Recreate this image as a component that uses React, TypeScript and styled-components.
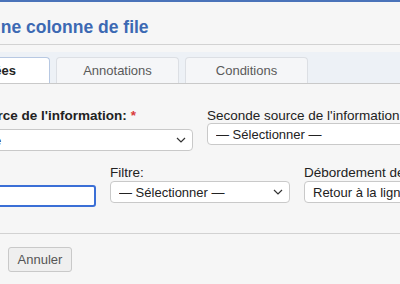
import React from 'react';
import styled, { createGlobalStyle } from 'styled-components';

const GlobalStyle = createGlobalStyle`
  html, body {
    margin: 0;
    padding: 0;
    background: #f6f6f6;
    overflow: hidden;
  }
  body {
    font-family: 'Liberation Sans', Arial, sans-serif;
    font-size: 13px;
    color: #222;
  }
`;

const Dialog = styled.div`
  width: 588px;
  margin-left: -94px;
  height: 284px;
  background: #f6f6f6;
  border-top: 2px solid #4a73b9;
  display: flex;
  flex-direction: column;
`;

const Header = styled.div`
  padding: 14px 10px 6px 18px;
  border-bottom: 1px solid #d2d2d2;
`;

const Title = styled.h2`
  margin: 0;
  font-size: 17.5px;
  line-height: 22px;
  font-weight: bold;
  color: #3c69b3;
`;

const TabStrip = styled.div`
  margin-top: 7px;
  padding: 5px 0 0 21px;
  background: #edf1f6;
  border-bottom: 1px solid #c9c9c9;
  display: flex;
  gap: 6px;
`;

const Tab = styled.div<{ $active?: boolean }>`
  width: 123px;
  height: 26px;
  box-sizing: border-box;
  display: flex;
  align-items: center;
  justify-content: center;
  border: 1px solid ${(p) => (p.$active ? '#b7c8e2' : '#dcdfe4')};
  border-bottom: none;
  border-radius: 4px 4px 0 0;
  background: ${(p) => (p.$active ? '#ffffff' : '#f5f6f8')};
  color: ${(p) => (p.$active ? '#222' : '#5a5a5a')};
  font-weight: ${(p) => (p.$active ? 'bold' : 'normal')};
`;

const Body = styled.div`
  padding: 24px 10px 26px;
  display: flex;
  flex-direction: column;
  gap: 14px;
  border-bottom: 1px solid #d2d2d2;
`;

const Row = styled.div<{ $cols: number }>`
  display: grid;
  grid-template-columns: repeat(${(p) => p.$cols}, 1fr);
  column-gap: 14px;
  align-items: start;
`;

const Field = styled.div`
  display: flex;
  flex-direction: column;
  min-width: 0;
`;

const Label = styled.label<{ $bold?: boolean; $shift?: number }>`
  font-size: 13.5px;
  line-height: 15px;
  font-weight: ${(p) => (p.$bold ? 'bold' : 'normal')};
  color: #222;
  white-space: nowrap;
  margin-left: ${(p) => p.$shift ?? 0}px;
`;

const Required = styled.span`
  color: #d93b3b;
  margin-left: 4px;
`;

const SelectBox = styled.div<{ $offset?: number }>`
  height: 22px;
  margin-top: ${(p) => p.$offset ?? 0}px;
  box-sizing: border-box;
  background: #fff;
  border: 1px solid #c9c9c9;
  border-radius: 4px;
  display: flex;
  align-items: center;
  padding: 0 6px 0 8px;
  color: #222;
  white-space: nowrap;
  overflow: hidden;
`;

const SelectValue = styled.span`
  flex: 1;
  overflow: hidden;
`;

const TextInput = styled.input`
  height: 22px;
  margin-top: 5px;
  box-sizing: border-box;
  border: 2px solid #3b6fd6;
  border-radius: 3px;
  background: #fff;
  font: inherit;
  padding: 0 6px;
  outline: none;
  width: 100%;
`;

const Footer = styled.div`
  padding: 13px 10px;
  display: flex;
  gap: 8px;
`;

const Button = styled.button<{ $primary?: boolean }>`
  height: 25px;
  padding: 0 9px;
  font: inherit;
  border-radius: 3px;
  border: 1px solid ${(p) => (p.$primary ? '#3b6ab3' : '#c9c9c9')};
  background: ${(p) => (p.$primary ? '#4a73b9' : '#efefef')};
  color: ${(p) => (p.$primary ? '#fff' : '#555')};
`;

const Chevron = () => (
  <svg width="10" height="6" viewBox="0 0 10 6">
    <polyline points="1,1 5,5 9,1" fill="none" stroke="#333" strokeWidth="1.2" />
  </svg>
);

const Select = ({ value, offset }: { value: string; offset?: number }) => (
  <SelectBox $offset={offset}>
    <SelectValue>{value}</SelectValue>
    <Chevron />
  </SelectBox>
);

export default function App() {
  return (
    <>
      <GlobalStyle />
      <Dialog>
        <Header>
          <Title>Ajouter une colonne de file</Title>
        </Header>
        <TabStrip>
          <Tab $active>Données</Tab>
          <Tab>Annotations</Tab>
          <Tab>Conditions</Tab>
        </TabStrip>
        <Body>
          <Row $cols={2}>
            <Field>
              <Label $bold $shift={-4}>
                Première source de l'information:<Required>*</Required>
              </Label>
              <Select value="Titre de page" offset={6} />
            </Field>
            <Field>
              <Label>Seconde source de l'information:</Label>
              <Select value="— Sélectionner —" />
            </Field>
          </Row>
          <Row $cols={3}>
            <Field>
              <Label>Titre:</Label>
              <TextInput defaultValue="" />
            </Field>
            <Field>
              <Label>Filtre:</Label>
              <Select value="— Sélectionner —" offset={1} />
            </Field>
            <Field>
              <Label>Débordement de texte:</Label>
              <Select value="Retour à la ligne" offset={1} />
            </Field>
          </Row>
        </Body>
        <Footer>
          <Button $primary>Enregistrer</Button>
          <Button>Annuler</Button>
        </Footer>
      </Dialog>
    </>
  );
}
